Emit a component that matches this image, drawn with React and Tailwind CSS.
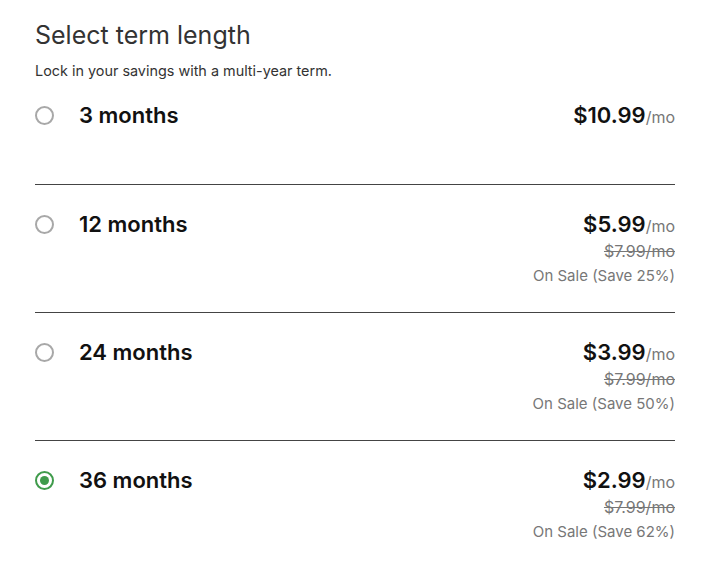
import { useState } from "react";

const terms = [
  { id: 3, label: "3 months", price: "$10.99" },
  { id: 12, label: "12 months", price: "$5.99", was: "$7.99/mo", save: "On Sale (Save 25%)" },
  { id: 24, label: "24 months", price: "$3.99", was: "$7.99/mo", save: "On Sale (Save 50%)" },
  { id: 36, label: "36 months", price: "$2.99", was: "$7.99/mo", save: "On Sale (Save 62%)" },
];

function Radio({ checked }) {
  if (checked) {
    return (
      <span className="flex items-center justify-center w-[19px] h-[19px] rounded-full border-2 border-[#3f9b4b]">
        <span className="w-[9px] h-[9px] rounded-full bg-[#3f9b4b]" />
      </span>
    );
  }
  return <span className="block w-[19px] h-[19px] rounded-full border-2 border-[#a8a8a8]" />;
}

export default function App() {
  const [selected, setSelected] = useState(36);

  return (
    <div className="bg-white min-h-[574px] font-['Inter',sans-serif]">
      <div className="w-[640px] ml-[35px]">
        {/* header */}
        <h1 className="pt-[19px] text-[25px] leading-[32px] text-[#333]">Select term length</h1>
        <p className="text-[14.4px] leading-[22px] text-[#333] mt-[9px]">Lock in your savings with a multi-year term.</p>

        {/* terms */}
        {terms.map((t, i) => (
          <div
            key={t.id}
            onClick={() => setSelected(t.id)}
            className={
              i === 0
                ? "flex justify-between items-start pt-[19px] pb-[55px] border-b border-[#444] cursor-pointer"
                : i === terms.length - 1
                ? "flex justify-between items-start pt-[25px] pb-[24px] cursor-pointer"
                : "flex justify-between items-start pt-[25px] pb-[24px] border-b border-[#444] cursor-pointer"
            }
          >
            <div className="flex items-center h-[28px] gap-[25px]">
              <Radio checked={selected === t.id} />
              <span className="text-[22px] font-semibold text-[#111]">{t.label}</span>
            </div>
            <div className="flex flex-col items-end">
              <div className="h-[28px] flex items-baseline">
                <span className="text-[22px] font-semibold text-[#111] leading-[28px]">{t.price}</span>
                <span className="text-[16px] text-[#777]">/mo</span>
              </div>
              {t.was && (
                <>
                  <span className="text-[16px] leading-[26px] text-[#777] line-through">{t.was}</span>
                  <span className="text-[15px] leading-[24px] text-[#777]">{t.save}</span>
                </>
              )}
            </div>
          </div>
        ))}
      </div>
    </div>
  );
}
